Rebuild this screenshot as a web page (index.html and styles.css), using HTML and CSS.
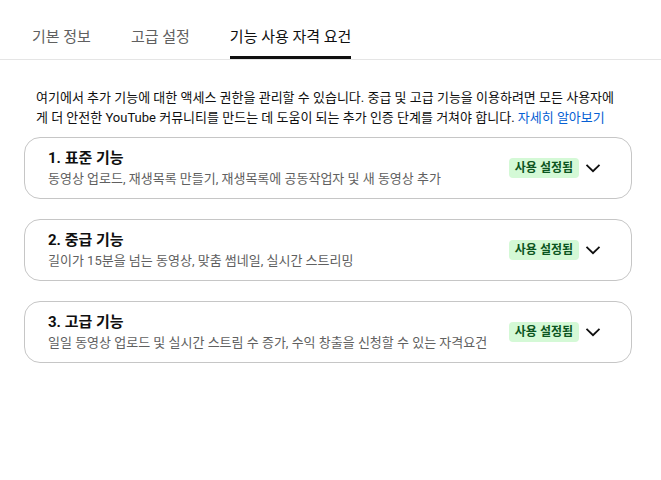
FILE: index.html
```html
<!DOCTYPE html>
<html lang="ko">
<head>
<meta charset="utf-8">
<link rel="stylesheet" href="styles.css">
</head>
<body>
<div class="tabs">
  <div class="tab">기본 정보</div>
  <div class="tab">고급 설정</div>
  <div class="tab active">기능 사용 자격 요건</div>
</div>
<p class="desc">여기에서 추가 기능에 대한 액세스 권한을 관리할 수 있습니다. 중급 및 고급 기능을 이용하려면 모든 사용자에게 더 안전한 YouTube 커뮤니티를 만드는 데 도움이 되는 추가 인증 단계를 거쳐야 합니다. <a class="link" href="#">자세히 알아보기</a></p>
<div class="cards">
  <div class="card">
    <div class="info">
      <div class="title">1. 표준 기능</div>
      <div class="sub">동영상 업로드, 재생목록 만들기, 재생목록에 공동작업자 및 새 동영상 추가</div>
    </div>
    <div class="right">
      <span class="badge">사용 설정됨</span>
      <svg class="chev" viewBox="0 0 24 24" width="24" height="24"><path d="M5.5 8.8 L12 15.2 L18.5 8.8" fill="none" stroke="#0f0f0f" stroke-width="1.8"/></svg>
    </div>
  </div>
  <div class="card">
    <div class="info">
      <div class="title">2. 중급 기능</div>
      <div class="sub">길이가 15분을 넘는 동영상, 맞춤 썸네일, 실시간 스트리밍</div>
    </div>
    <div class="right">
      <span class="badge">사용 설정됨</span>
      <svg class="chev" viewBox="0 0 24 24" width="24" height="24"><path d="M5.5 8.8 L12 15.2 L18.5 8.8" fill="none" stroke="#0f0f0f" stroke-width="1.8"/></svg>
    </div>
  </div>
  <div class="card">
    <div class="info">
      <div class="title">3. 고급 기능</div>
      <div class="sub">일일 동영상 업로드 및 실시간 스트림 수 증가, 수익 창출을 신청할 수 있는 자격요건</div>
    </div>
    <div class="right">
      <span class="badge">사용 설정됨</span>
      <svg class="chev" viewBox="0 0 24 24" width="24" height="24"><path d="M5.5 8.8 L12 15.2 L18.5 8.8" fill="none" stroke="#0f0f0f" stroke-width="1.8"/></svg>
    </div>
  </div>
</div>
</body>
</html>
```
FILE: styles.css
```css
html, body {
  margin: 0;
  padding: 0;
  background: #fff;
}
body {
  font-family: Roboto, "Noto Sans CJK KR", sans-serif;
  color: #0f0f0f;
}
.tabs {
  display: flex;
  gap: 40px;
  padding-left: 32px;
  height: 60px;
  border-bottom: 1px solid #e5e5e5;
  box-sizing: border-box;
}
.tab {
  font-size: 15px;
  color: #606060;
  display: flex;
  align-items: center;
  padding-top: 14px;
  box-sizing: border-box;
  border-bottom: 3px solid transparent;
}
.tab.active {
  color: #0f0f0f;
  border-bottom-color: #0f0f0f;
}
.desc {
  margin: 0;
  padding: 28px 36px 9px 36px;
  font-size: 13px;
  line-height: 20px;
}
.link {
  color: #065fd4;
  text-decoration: none;
}
.cards {
  display: flex;
  flex-direction: column;
  gap: 20px;
  margin-left: 24px;
  width: 608px;
}
.card {
  display: flex;
  align-items: center;
  justify-content: space-between;
  height: 62px;
  box-sizing: border-box;
  border: 1px solid #c6c6c6;
  border-radius: 16px;
  padding: 0 26px 0 23px;
}
.title {
  font-size: 15px;
  font-weight: 700;
  line-height: 22px;
}
.sub {
  font-size: 13px;
  color: #606060;
  line-height: 20px;
}
.right {
  display: flex;
  align-items: center;
  gap: 2px;
}
.badge {
  background: #d4f9d6;
  color: #0b5520;
  font-size: 12px;
  font-weight: 700;
  height: 20px;
  line-height: 20px;
  padding: 0 6px;
  border-radius: 4px;
}
.chev {
  display: block;
}
```
